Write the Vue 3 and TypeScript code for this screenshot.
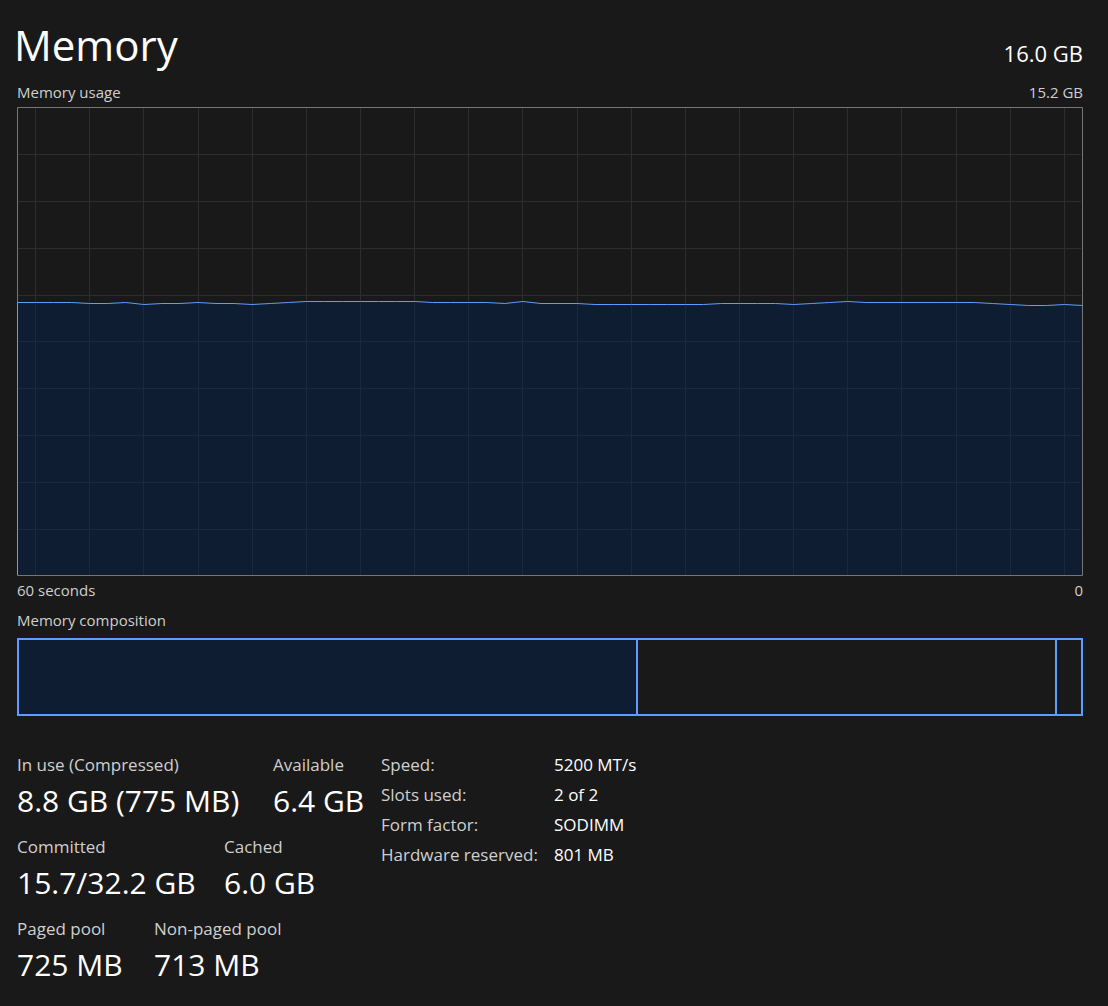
<script setup lang="ts">
interface Stat {
  label: string
  value: string
  width: number
}

interface Segment {
  name: string
  share: number
  filled: boolean
}

const W = 1066
const H = 469
const STEP = (W - 1) / 59

// Height of the usage line at each one-second sample, oldest first
const samples: number[] = [
  195, 195, 195, 195, 196, 196, 195, 197, 196, 196, 195, 196, 196, 197, 196,
  195, 194, 194, 194, 194, 194, 194, 194, 195, 195, 195, 195, 196, 194, 196,
  196, 196, 197, 197, 197, 197, 197, 197, 197, 196, 196, 196, 196, 197, 196,
  195, 194, 195, 195, 195, 195, 195, 195, 195, 196, 197, 198, 198, 197, 198,
]

const linePoints = samples
  .map((y, i) => `${(i * STEP + 0.5).toFixed(2)},${y + 0.5}`)
  .join(' ')
const areaPoints = `0,${H} 0,${samples[0]} ${linePoints} ${W},${H}`

const columns = Array.from({ length: 20 }, (_, i) => Math.round((1 + i * 3) * STEP) + 0.5)
const rows = Array.from({ length: 9 }, (_, i) => Math.ceil((i + 1) * 46.8) + 0.5)

const segments: Segment[] = [
  { name: 'In use', share: 619, filled: true },
  { name: 'Standby', share: 419, filled: false },
  { name: 'Free', share: 24, filled: false },
]

const stats: Stat[][] = [
  [
    { label: 'In use (Compressed)', value: '8.8 GB (775 MB)', width: 256 },
    { label: 'Available', value: '6.4 GB', width: 90 },
  ],
  [
    { label: 'Committed', value: '15.7/32.2 GB', width: 207 },
    { label: 'Cached', value: '6.0 GB', width: 90 },
  ],
  [
    { label: 'Paged pool', value: '725 MB', width: 137 },
    { label: 'Non-paged pool', value: '713 MB', width: 135 },
  ],
]

const specs: { label: string; value: string }[] = [
  { label: 'Speed:', value: '5200 MT/s' },
  { label: 'Slots used:', value: '2 of 2' },
  { label: 'Form factor:', value: 'SODIMM' },
  { label: 'Hardware reserved:', value: '801 MB' },
]
</script>

<template>
  <main class="panel">
    <header class="head">
      <h1>Memory</h1>
      <span class="total">16.0 GB</span>
    </header>

    <section>
      <div class="caption">
        <span>Memory usage</span>
        <span>15.2 GB</span>
      </div>
      <svg class="chart" :viewBox="`0 0 ${W} ${H}`" preserveAspectRatio="none">
        <g class="grid">
          <line v-for="x in columns" :key="'c' + x" :x1="x" :x2="x" y1="1" :y2="H - 1" />
          <line v-for="y in rows" :key="'r' + y" :y1="y" :y2="y" x1="1" :x2="W - 2" />
        </g>
        <polygon class="area" :points="areaPoints" />
        <rect class="frame" x="0.5" y="0.5" :width="W - 1" :height="H - 1" />
        <polyline class="line" :points="`0.5,${H - 1} ${linePoints}`" />
      </svg>
      <div class="caption axis">
        <span>60 seconds</span>
        <span>0</span>
      </div>
    </section>

    <section>
      <div class="caption composition-title">Memory composition</div>
      <div class="composition">
        <div
          v-for="s in segments"
          :key="s.name"
          class="segment"
          :class="{ filled: s.filled }"
          :style="{ flexGrow: s.share }"
        ></div>
      </div>
    </section>

    <section class="details">
      <div class="stats">
        <div v-for="(row, i) in stats" :key="i" class="stat-row">
          <dl v-for="s in row" :key="s.label" class="stat" :style="{ width: s.width + 'px' }">
            <dt>{{ s.label }}</dt>
            <dd>{{ s.value }}</dd>
          </dl>
        </div>
      </div>
      <table class="specs">
        <tbody>
          <tr v-for="s in specs" :key="s.label">
            <th scope="row">{{ s.label }}</th>
            <td>{{ s.value }}</td>
          </tr>
        </tbody>
      </table>
    </section>
  </main>
</template>

<style>
body {
  background: #191919;
}
</style>

<style scoped>
.panel {
  box-sizing: border-box;
  min-height: 100vh;
  padding: 16px 25px 16px 17px;
  background: #191919;
  color: #fff;
  font-family: 'Segoe UI', 'Open Sans', 'Noto Sans', sans-serif;
}

.head {
  display: flex;
  justify-content: space-between;
  align-items: flex-end;
  height: 64px;
}

h1 {
  margin: 0 0 0 -3px;
  font-size: 42px;
  line-height: 70px;
  font-weight: 400;
}

.total {
  font-size: 22px;
  line-height: 54px;
}

.caption {
  display: flex;
  justify-content: space-between;
  height: 27px;
  font-size: 15px;
  line-height: 24px;
  color: #cfcfcf;
}

.chart {
  display: block;
  width: 100%;
  height: 469px;
}

.chart * {
  vector-effect: non-scaling-stroke;
}

.grid line {
  stroke: #2d2d2d;
}

.area {
  fill: rgba(0, 35, 90, 0.4);
}

.frame {
  fill: none;
  stroke: #767676;
}

.line {
  fill: none;
  stroke: #5c9dff;
}

.axis {
  height: 30px;
  line-height: 28px;
}

.composition-title {
  height: 32px;
  line-height: 28px;
}

.composition {
  display: flex;
  box-sizing: border-box;
  height: 78px;
  border: 2px solid #5c9dff;
}

.segment {
  box-sizing: border-box;
  flex-basis: 0;
}

.segment:not(:last-child) {
  border-right: 2px solid #5c9dff;
}

.segment.filled {
  background: #0f1d33;
}

.details {
  display: flex;
  align-items: flex-start;
  gap: 18px;
  padding-top: 34px;
}

.stat-row {
  display: flex;
  height: 82px;
}

.stat {
  margin: 0;
  white-space: nowrap;
}

.stat dt {
  font-size: 17px;
  line-height: 30px;
  color: #cfcfcf;
}

.stat dd {
  margin: 0;
  font-size: 30px;
  line-height: 42px;
}

.specs {
  border-collapse: collapse;
  font-size: 17px;
  line-height: 30px;
}

.specs th,
.specs td {
  padding: 0;
  font-weight: 400;
  text-align: left;
  white-space: nowrap;
}

.specs th {
  width: 173px;
  color: #cfcfcf;
}
</style>
